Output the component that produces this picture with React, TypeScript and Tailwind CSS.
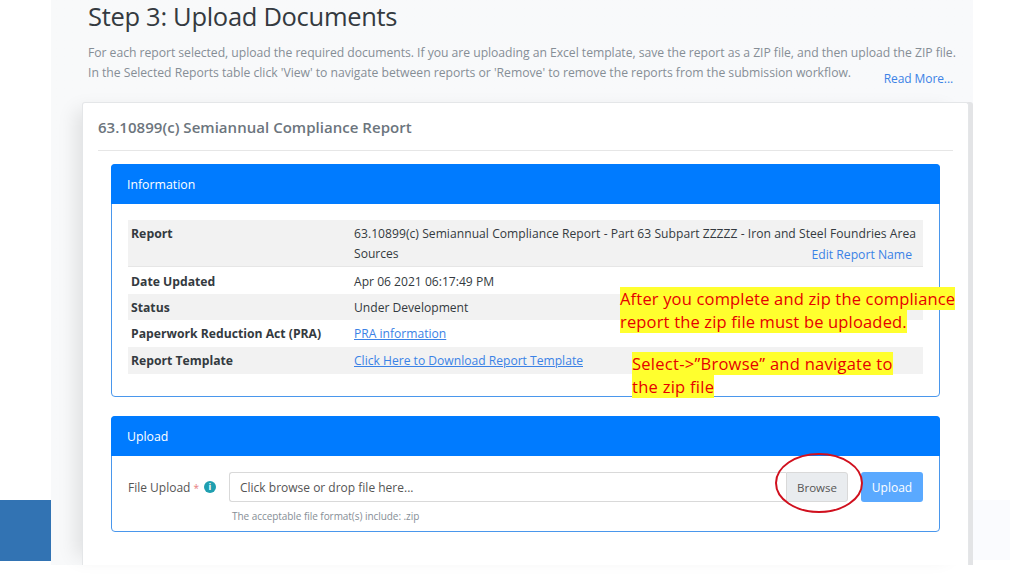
const rows = [
  { label: 'Date Updated', value: 'Apr 06 2021 06:17:49 PM', h: 'h-[27px] pt-[3px]', shade: false },
  { label: 'Status', value: 'Under Development', h: 'h-[26px] pt-[2px]', shade: true },
  { label: 'Paperwork Reduction Act (PRA)', value: 'PRA information', h: 'h-[27px] pt-[2px]', shade: false, link: true },
  { label: 'Report Template', value: 'Click Here to Download Report Template', h: 'h-[27px] pt-[2px]', shade: true, link: true },
]

const App = () => {
  return (
    <div className="relative w-[1024px] h-[576px] overflow-hidden bg-white font-['Open_Sans',sans-serif] text-[12.1px] text-[#343a40]">
      {/* side blocks */}
      <div className="absolute left-0 top-[500px] w-[51px] h-[61px] bg-[#3273b3]" />
      <div className="absolute left-[973px] top-[500px] w-[37px] h-[60px] bg-[#fafbfe]" />

      <div className="ml-[51px] w-[922px] h-[565px] bg-gradient-to-r from-[#f8f9fa] to-[#f8f9fb]">
        <div className="pl-[37px] pr-[16px] h-[102px] overflow-hidden">
          <h1 className="-mt-px text-[25.5px] leading-[34px] font-medium text-[#343a40] tracking-[-0.3px] whitespace-nowrap">
            Step 3: Upload Documents
          </h1>
          <p className="mt-[10px] text-[12.2px] leading-[19.5px] text-[#868e96] tracking-[-0.04px] whitespace-nowrap">
            For each report selected, upload the required documents. If you are uploading an Excel template, save the report as a ZIP file, and then upload the ZIP file.
          </p>
          <div className="flex items-start">
            <p className="flex-1 text-[12.2px] leading-[19.5px] text-[#868e96] tracking-[-0.02px] whitespace-nowrap">
              In the Selected Reports table click 'View' to navigate between reports or 'Remove' to remove the reports from the submission workflow.
            </p>
            <a className="mt-[6px] mr-[4px] text-[12px] leading-[19px] text-[#3b82e6] tracking-[-0.1px]">Read More...</a>
          </div>
        </div>

        <div className="ml-[31px] w-[887px] h-[463px] bg-white rounded-t-[3px] border border-b-0 border-[#e4e6e8] shadow-[-14px_0_18px_-8px_rgba(0,0,0,0.1),4px_0_0_0_#e3e4e6] px-[15px]">
          <div className="h-[48px] flex items-center pt-[2px] border-b border-[#e6e6e6]">
            <h2 className="text-[15px] font-semibold text-[#6c757d] tracking-[0.03px]">63.10899(c) Semiannual Compliance Report</h2>
          </div>

          <div className="mt-[13px] mx-[13px] h-[233px] border border-[#4a97ec] rounded-[4px]">
            <div className="h-[40px] -mx-px -mt-px bg-[#007bff] rounded-t-[4px] flex items-center pt-[2px] px-[16px] text-white text-[12.3px]">
              Information
            </div>
            <div className="mt-[16px] mx-[16px]">
              <div className="flex h-[47px] bg-[#f2f2f2] border-b border-[#e6e6e6]">
                <div className="w-[226px] shrink-0 pl-[3px] pt-[4px] font-bold leading-[19px] text-[12.3px]">Report</div>
                <div className="flex-1 min-w-0 pt-[4px] leading-[19.5px]">
                  <div className="whitespace-nowrap tracking-[0.04px]">63.10899(c) Semiannual Compliance Report - Part 63 Subpart ZZZZZ - Iron and Steel Foundries Area</div>
                  <div className="flex justify-between pr-[11px]">
                    <span>Sources</span>
                    <a className="mt-px text-[12.2px] text-[#3b82e6]">Edit Report Name</a>
                  </div>
                </div>
              </div>
              {rows.map((r) => (
                <div key={r.label} className={`flex items-center ${r.h} ${r.shade ? 'bg-[#f2f2f2]' : 'bg-white'}`}>
                  <div className="w-[226px] shrink-0 pl-[3px] font-bold text-[12.2px]">{r.label}</div>
                  <div className={`flex-1 ${r.link ? 'text-[#3b82e6] underline' : ''}`}>{r.value}</div>
                </div>
              ))}
            </div>
          </div>

          <div className="mt-[19px] mx-[13px] h-[116px] border border-[#4a97ec] rounded-[4px]">
            <div className="h-[40px] -mx-px -mt-px bg-[#007bff] rounded-t-[4px] flex items-center pt-[2px] px-[16px] text-white text-[12.3px]">
              Upload
            </div>
            <div className="mt-[16px] ml-[16px] mr-[16px] flex">
              <div className="w-[101px] shrink-0 h-[30px] flex items-center pt-[2px] text-[12px] text-[#555] whitespace-nowrap">
                File Upload <span className="ml-[3px] text-[10px] text-[#e87d7d]">*</span>
                <span className="ml-[5px] -mt-[2px] w-[12px] h-[12px] rounded-full bg-[#1f9fb0] text-white text-[9px] font-bold flex items-center justify-center">i</span>
              </div>
              <div className="w-[557px] h-[30px] flex items-center pt-[2px] border border-[#d9d9d9] rounded-l-[3px] border-r-0 pl-[10px] text-[#555] text-[12px]">
                Click browse or drop file here...
              </div>
              <div className="w-[62px] h-[30px] flex items-center justify-center pt-[2px] bg-[#e9ecef] border border-[#d9d9d9] rounded-r-[3px] text-[#555] text-[11.5px]">
                Browse
              </div>
              <div className="ml-[13px] w-[62px] h-[30px] flex items-center justify-center pt-[2px] bg-[#5aa9ff] rounded-[3px] text-white text-[12px] font-medium">
                Upload
              </div>
            </div>
            <div className="mt-[7px] ml-[120px] text-[10px] leading-[14px] text-[#868e96] tracking-[-0.05px]">
              The acceptable file format(s) include: .zip
            </div>
          </div>
        </div>
      </div>

      {/* annotations */}
      <div className="absolute left-[620px] top-[287px] text-[16.5px] leading-[23px] text-[#e60000] tracking-[0.17px] whitespace-nowrap">
        <div className="w-fit bg-[#ffff2e]">After you complete and zip the compliance</div>
        <div className="w-fit bg-[#ffff2e]">report the zip file must be uploaded.</div>
      </div>
      <div className="absolute left-[632px] top-[352px] text-[16.5px] leading-[23px] text-[#e60000] tracking-[0.27px] whitespace-nowrap">
        <div className="w-fit bg-[#ffff2e]">Select-&gt;”Browse” and navigate to</div>
        <div className="w-fit bg-[#ffff2e]">the zip file</div>
      </div>
      <svg className="absolute left-[774px] top-[452px]" width="90" height="62" viewBox="0 0 90 62" fill="none">
        <ellipse cx="45" cy="31" rx="43" ry="29" stroke="#d0101e" strokeWidth="2" />
      </svg>
    </div>
  )
}

export default App
